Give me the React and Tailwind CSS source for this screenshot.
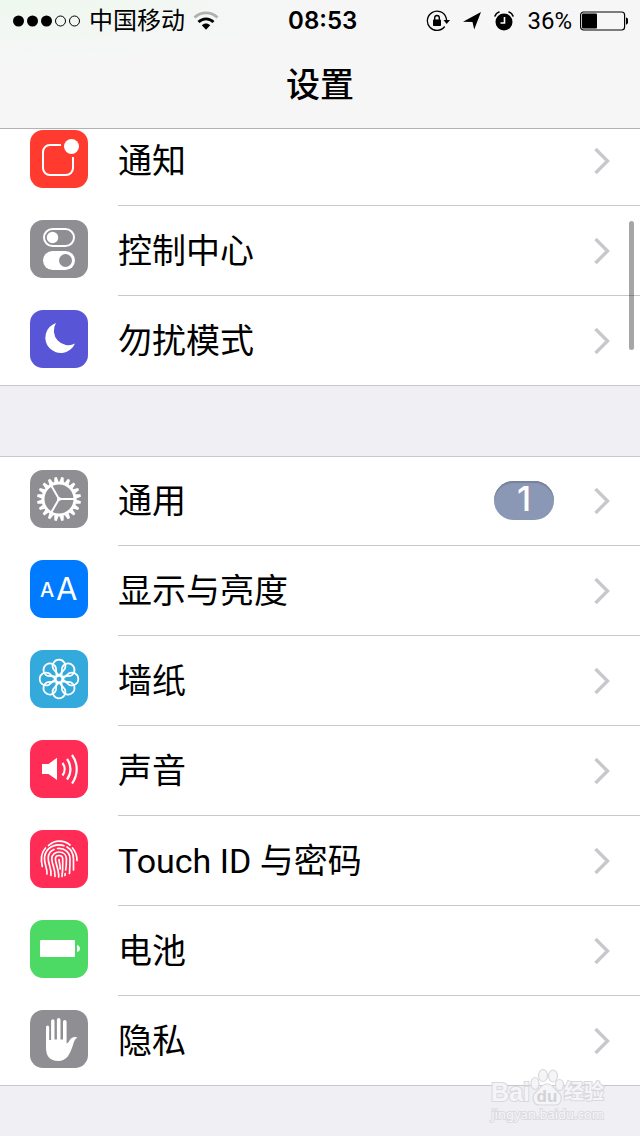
import clsx from "clsx";

const GEAR_TEETH = Array.from({ length: 20 }, (_, i) => 9 + i * 18);
const PETALS = Array.from({ length: 8 }, (_, i) => i * 45);

const NotificationsIcon = () => (
    <>
        <path d="M31 15H20a7 7 0 0 0-7 7v16a7 7 0 0 0 7 7h16a7 7 0 0 0 7-7V27" fill="none" stroke="#fff" strokeWidth="2" />
        <circle cx="41.5" cy="16.5" r="7.5" fill="#fff" />
    </>
);

const ControlCenterIcon = () => (
    <>
        <rect x="14" y="9" width="30" height="17" rx="8.5" fill="none" stroke="#fff" strokeWidth="2" />
        <circle cx="22.5" cy="17.5" r="5.7" fill="#fff" />
        <rect x="13" y="31" width="32" height="19" rx="9.5" fill="#fff" />
        <circle cx="35.5" cy="40.5" r="6.5" fill="#8e8e93" />
    </>
);

const MoonIcon = () => (
    <path d="M26 13A15.4 15.4 0 1 0 45 33.5A14.5 14.5 0 0 1 26 13z" fill="#fff" />
);

const GearIcon = () => (
    <g transform="translate(29 29)">
        <circle r="16" fill="none" stroke="#fff" strokeWidth="3" />
        {GEAR_TEETH.map((angle) => (
            <path key={angle} d="M-2.2-17L-1.2-22H1.2L2.2-17z" fill="#fff" transform={`rotate(${angle})`} />
        ))}
        <path d="M0 0H15M0 0L-7.5-13M0 0L-7.5 13" stroke="#fff" strokeWidth="2" />
        <circle r="2" fill="#fff" />
    </g>
);

const DisplayIcon = () => (
    <g fill="#fff" fontFamily="Inter, sans-serif">
        <text x="10" y="37" fontSize="20" fontWeight="500">A</text>
        <text x="26" y="40" fontSize="31" fontWeight="400">A</text>
    </g>
);

const WallpaperIcon = () => (
    <g transform="translate(29 29)" fill="none" stroke="#fff" strokeWidth="1.7">
        <circle r="3.4" />
        {PETALS.map((angle) => (
            <path key={angle} d="M0-3.4L-5.7-10A6.4 6.4 0 1 1 5.7-10z" transform={`rotate(${angle})`} />
        ))}
    </g>
);

const SoundIcon = () => (
    <>
        <path d="M12 24h6.5L27 17.7V40L18.5 34H12z" fill="#fff" />
        <path
            d="M32.5 23a10.5 10.5 0 0 1 0 12.5M37 19a17 17 0 0 1 0 20.5M42 15a24 24 0 0 1 0 28.5"
            fill="none"
            stroke="#fff"
            strokeWidth="2.2"
        />
    </>
);

const TouchIdIcon = () => (
    <g fill="none" stroke="#fff" strokeWidth="1.7" strokeLinecap="round">
        <path d="M18.5 15.5C24.5 9.7 34 9.7 40 15" />
        <path d="M15.5 18C11.3 22.5 10.3 28 12.3 36.5" />
        <path d="M42.5 18C45.5 21.5 47 26 47 30.5" />
        <path d="M17 44C17.5 38 14.5 35 14.5 28.5C14.5 20.5 21 14.8 29 14.8C31 14.8 32.5 15 34 15.7" />
        <path d="M37 17C41.3 19.5 43.5 24 43.5 29V40" />
        <path d="M21 45.5C21.5 37 18.2 35 18.2 28C18.2 24 20.5 21 24 19.5" />
        <path d="M27.5 18.5C35 18 40 22.5 40 29C40 36 39.7 39 39.5 43.5" />
        <path d="M25 46.5C25.5 38 21.8 35 21.8 28.5C21.8 25 25 22 29 22C33.5 22 36.4 25 36.4 29C36.4 34 36.2 37 35.7 40" />
        <path d="M35.2 43.5L35 45.5" />
        <path d="M28.7 47C29 40 25.4 33 25.4 29C25.4 24.3 32.7 24.3 32.7 29C32.7 36 33 40 32 46.5" />
        <path d="M29 29.5C29.2 33 30.3 35 30.2 39" />
    </g>
);

const BatteryIcon = () => (
    <>
        <rect x="10" y="20" width="35" height="17" rx="1" fill="#fff" />
        <path d="M47 25c4 1 4 6 0 7z" fill="#fff" />
    </>
);

const HandIcon = () => (
    <path
        d="M16 17.2a1.6 1.6 0 0 1 3.2 0V30h1.9V11a1.7 1.7 0 0 1 3.4 0v18.5h2.4V9.8a1.8 1.8 0 0 1 3.6 0v19.7H33V11.7a1.8 1.8 0 0 1 3.6 0V33.5C38.5 33 39.5 30 41 28.5C42.5 27 45 26.5 47.5 27.5C44.5 29 44 32 43 35C40 44 37 51 28 51C20 51 16 46 16 38z"
        fill="#fff"
    />
);

const ICONS = {
    notifications: NotificationsIcon,
    control: ControlCenterIcon,
    moon: MoonIcon,
    gear: GearIcon,
    display: DisplayIcon,
    wallpaper: WallpaperIcon,
    sound: SoundIcon,
    touchId: TouchIdIcon,
    battery: BatteryIcon,
    hand: HandIcon,
};

const alertItems = [
    { id: "notifications", label: "通知", color: "bg-[#ff3b30]" },
    { id: "control", label: "控制中心", color: "bg-[#8e8e93]" },
    { id: "moon", label: "勿扰模式", color: "bg-[#5856d6]" },
];

const generalItems = [
    { id: "gear", label: "通用", color: "bg-[#8e8e93]", badge: 1 },
    { id: "display", label: "显示与亮度", color: "bg-[#007aff]" },
    { id: "wallpaper", label: "墙纸", color: "bg-[#34aadc]" },
    { id: "sound", label: "声音", color: "bg-[#ff2d55]" },
    { id: "touchId", label: "Touch ID 与密码", color: "bg-[#ff2d55]" },
    { id: "battery", label: "电池", color: "bg-[#4cd964]" },
    { id: "hand", label: "隐私", color: "bg-[#8e8e93]" },
];

const SettingsRow = ({ item, isLast }) => {
    const Icon = ICONS[item.id];

    return (
        <li className="h-[90px] first:-mt-px last:-mb-px">
            <a href={`#${item.id}`} className="flex h-full gap-[30px] pl-[30px]">
                <svg viewBox="0 0 58 58" className={clsx("mt-[14px] size-[58px] shrink-0 rounded-[13px]", item.color)} aria-hidden="true">
                    <Icon />
                </svg>
                <span className={clsx("flex min-w-0 flex-1 items-center gap-10 pr-[30px]", !isLast && "border-b border-[#c8c7cc]")}>
                    <span className="flex-1 truncate font-[Roboto,'Noto_Sans_CJK_SC',sans-serif] text-[34px] leading-[50px]">{item.label}</span>
                    {item.badge && (
                        <span className="flex h-[39px] w-[60px] items-center justify-center rounded-full bg-[#8b98b5] pb-1 text-[34px] font-medium text-white shadow-[inset_0_2px_1px_#76829c]">
                            {item.badge}
                        </span>
                    )}
                    <svg viewBox="0 0 16 28" className="h-7 w-4 shrink-0" aria-hidden="true">
                        <path d="M1.5 2L13.5 14L1.5 26" fill="none" stroke="#c7c7cc" strokeWidth="3.4" />
                    </svg>
                </span>
            </a>
        </li>
    );
};

const SettingsGroup = ({ items }) => (
    <ul className="border-y border-[#c8c7cc] bg-white">
        {items.map((item, index) => (
            <SettingsRow key={item.id} item={item} isLast={index === items.length - 1} />
        ))}
    </ul>
);

const StatusBar = () => (
    <div className="flex h-[42px] items-center justify-between px-3 text-2xl">
        <div className="flex items-center gap-2">
            <svg viewBox="0 0 69 14" className="h-[14px] w-[69px]" aria-hidden="true">
                <circle cx="6.5" cy="7" r="5.5" />
                <circle cx="20.5" cy="7" r="5.5" />
                <circle cx="34.5" cy="7" r="5.5" />
                <circle cx="48.5" cy="7" r="5" fill="none" stroke="#000" />
                <circle cx="62.5" cy="7" r="5" fill="none" stroke="#000" />
            </svg>
            <span>中国移动</span>
            <svg viewBox="0 0 26 20" className="h-5 w-[26px]" aria-hidden="true">
                <path d="M1.5 6.5C8 .3 18 .3 24.5 6.5" fill="none" stroke="#b0b0b0" strokeWidth="2.8" />
                <path d="M5.5 11C10 6.8 16 6.8 20.5 11" fill="none" stroke="#000" strokeWidth="2.9" />
                <path d="M8.8 14.2C11.5 11.8 14.5 11.8 17.2 14.2L13 18.8z" />
            </svg>
        </div>
        <time className="font-semibold">08:53</time>
        <div className="flex items-center gap-[13px]">
            <svg viewBox="0 0 24 22" className="h-[22px] w-6" aria-hidden="true">
                <path d="M18.7 16.5A9.6 9.6 0 1 1 20 7.5Q20.5 9 20.5 10" fill="none" stroke="#000" strokeWidth="1.3" />
                <path d="M17.5 10H24L20.7 14z" />
                <rect x="7" y="9.5" width="8" height="6.5" rx=".8" />
                <path d="M8.7 10V7.8a2.3 2.3 0 0 1 4.6 0V10" fill="none" stroke="#000" strokeWidth="1.4" />
            </svg>
            <svg viewBox="0 0 18 18" className="size-[18px]" aria-hidden="true">
                <path d="M18 0L11.2 17.5L9.5 10L0 9.8z" />
            </svg>
            <svg viewBox="0 0 20 20" className="size-5" aria-hidden="true">
                <circle cx="10" cy="11" r="8.5" />
                <path d="M1 5Q2 2 5 1M19 5Q18 2 15 1" fill="none" stroke="#000" strokeWidth="1.6" strokeLinecap="round" />
                <path d="M10.5 6V12H6.5" fill="none" stroke="#fff" strokeWidth="1.6" />
            </svg>
            <div className="flex items-center gap-2">
                <span className="font-[Roboto,sans-serif]">36%</span>
                <svg viewBox="0 0 48 20" className="h-5 w-12" aria-hidden="true">
                    <rect x=".6" y="1" width="44" height="18" rx="3" fill="none" stroke="#000" strokeWidth="1.2" />
                    <rect x="2" y="2.5" width="15" height="15" rx="1" />
                    <path d="M46 6.5c3 0 3 7 0 7z" />
                </svg>
            </div>
        </div>
    </div>
);

const Watermark = () => (
    <div className="pointer-events-none absolute right-9 bottom-[14px] flex flex-col items-center" aria-hidden="true">
        <div className="flex items-end text-[#f5f5f8]">
            <span className="font-['Liberation_Sans'] text-[25px] leading-7 font-bold [-webkit-text-stroke:2px_#d9d9dc] [paint-order:stroke]">Bai</span>
            <svg viewBox="0 0 34 38" className="h-[38px] w-[34px]">
                <g fill="#f5f5f8" stroke="#d9d9dc" strokeWidth="1.2">
                    <ellipse cx="5" cy="15.5" rx="4" ry="6" />
                    <ellipse cx="13" cy="7.5" rx="4.5" ry="6" />
                    <ellipse cx="23" cy="8" rx="4.5" ry="6" />
                    <ellipse cx="29.5" cy="17" rx="4" ry="5.5" />
                    <path d="M17 16C11 16 10 21 6 24C1 28 3 37 9 37H25C32 37 33 28 28 24C24 21 23 16 17 16z" />
                </g>
                <text x="17" y="34" textAnchor="middle" fontSize="17" fontWeight="700" fontFamily="Liberation Sans, sans-serif" fill="#d2d2d6">du</text>
            </svg>
            <span className="text-xl leading-7 font-bold [-webkit-text-stroke:2px_#d9d9dc] [paint-order:stroke]">经验</span>
        </div>
        <span className="font-['Noto_Sans'] text-[13px] leading-4 text-[#f5f5f8] [-webkit-text-stroke:2px_#dcdcdf] [paint-order:stroke]">jingyan.baidu.com</span>
    </div>
);

const App = () => {
    return (
        <div className="relative min-h-screen overflow-hidden bg-[#efeff4] font-[Inter,'Noto_Sans_CJK_SC',sans-serif] text-black">
            <header className="relative z-10 border-b border-[#b2b2b4] bg-[#f6f6f7] bg-[radial-gradient(ellipse_at_top_left,#eef8ee,#f6f6f7_35%)]">
                <StatusBar />
                <h1 className="text-center text-[34px] leading-[86px] font-medium">设置</h1>
            </header>

            {/* list is scrolled slightly under the header */}
            <main className="-mt-[13px] flex flex-col gap-[70px]">
                <SettingsGroup items={alertItems} />
                <SettingsGroup items={generalItems} />
            </main>

            {/* scroll indicator */}
            <div className="absolute top-[221px] right-[6px] h-[129px] w-[5px] rounded-full bg-black/35" />
            <Watermark />
        </div>
    );
};

export default App;
